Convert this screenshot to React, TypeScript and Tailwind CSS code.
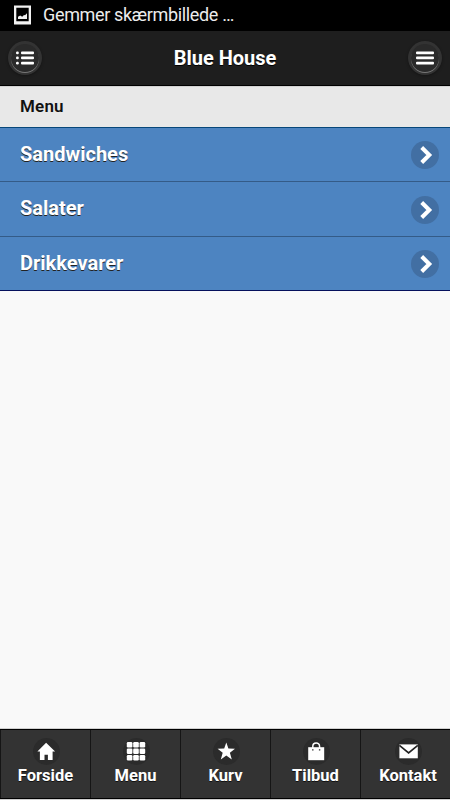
import React from 'react'

const categories = ['Sandwiches', 'Salater', 'Drikkevarer']

const tabs = [
    { label: 'Forside', icon: <HomeIcon /> },
    { label: 'Menu', icon: <GridIcon /> },
    { label: 'Kurv', icon: <StarIcon /> },
    { label: 'Tilbud', icon: <BagIcon /> },
    { label: 'Kontakt', icon: <MailIcon /> },
]

function HomeIcon() {
    return (
        <svg viewBox="0 0 27 27" className="w-[27px] h-[27px]" fill="white">
            <path d="M13.1 4.7 22.1 13.6H19.6V22H14.9V16.8H11.5V22H6.9V13.6H4.4Z" />
        </svg>
    )
}

function GridIcon() {
    return (
        <svg viewBox="0 0 27 27" className="w-[27px] h-[27px]" fill="white">
            {[4.1, 10.6, 17].map((y) => (
                [3.8, 10.2, 16.6].map((x) => <rect key={`${x}-${y}`} x={x} y={y} width="5.6" height="5.4" rx="1.2" />)
            ))}
        </svg>
    )
}

function StarIcon() {
    return (
        <svg viewBox="0 0 27 27" className="w-[27px] h-[27px]" fill="white">
            <path d="M13.3 4.4 15.4 10.5 22 10.7 16.9 14.7 18.8 21.4 13.3 17.6 7.8 21.4 9.7 14.7 4.6 10.7 11.2 10.5Z" />
        </svg>
    )
}

function BagIcon() {
    return (
        <svg viewBox="0 0 27 27" className="w-[27px] h-[27px]">
            <path d="M5.2 9.2H21.2V22.2H5.2Z" fill="white" />
            <path d="M9.8 11.4V8.4C9.8 4 16.6 4 16.6 8.4V11.4" fill="none" stroke="white" strokeWidth="1.5" />
            <path d="M9.1 11.8H10.5M15.9 11.8H17.3" stroke="#2b2b2b" strokeWidth="1.2" />
        </svg>
    )
}

function MailIcon() {
    return (
        <svg viewBox="0 0 27 27" className="w-[27px] h-[27px]">
            <path d="M4.4 6.4H22.8V20.3H4.4Z" fill="white" />
            <path d="M4.4 7.4 13.6 14.8 22.8 7.4" fill="none" stroke="#222" strokeWidth="1.7" />
        </svg>
    )
}

const RoundButton = ({ children, label }) => {
    return (
        <button aria-label={label} className="w-[34px] h-[34px] rounded-full bg-[#333] flex items-center justify-center shadow-[0_1px_3px_rgba(0,0,0,0.35)]">
            <span className="w-[28px] h-[28px] rounded-full bg-[#2a2a2a] flex items-center justify-center shadow-[0_1px_0_#777]">
                {children}
            </span>
        </button>
    )
}

const App = () => {
    return (
        <div className="h-[800px] w-[450px] overflow-hidden flex flex-col bg-[#f9f9f9] font-['Roboto',sans-serif]">
            <div className="h-[31px] shrink-0 bg-black flex items-center pl-[14px] pb-[1px]">
                <svg viewBox="0 0 17 20" className="w-[17px] h-[20px]">
                    <path fillRule="evenodd" d="M0 0.5H17V19.5H0ZM2.3 2.8V16.3H14.7V2.8Z" fill="#f2f2f2" />
                    <path d="M4 14V11.8L6.2 10.6 8.2 11.8 10 10 11 10.3 13 8.2V14Z" fill="#f2f2f2" />
                </svg>
                <span className="ml-[12px] text-[18px] leading-[28px] tracking-[-0.34px] text-[#ececec] whitespace-nowrap">Gemmer skærmbillede …</span>
            </div>

            <header className="h-[55px] shrink-0 bg-[#1e1e1e] border-b border-black flex items-center justify-between px-2">
                <RoundButton label="Liste">
                    <svg viewBox="0 0 18 14" className="w-[18px] h-[14px]" fill="white">
                        {[0.5, 5.5, 10.7].map((y) => (
                            <g key={y}>
                                <rect x="0" y={y} width="2.8" height="2.8" rx="1.2" />
                                <rect x="5" y={y} width="13" height="2.8" rx="1" />
                            </g>
                        ))}
                    </svg>
                </RoundButton>
                <h1 className="text-[20px] leading-[24px] font-bold text-white [text-shadow:0_1px_0_#000]">Blue House</h1>
                <RoundButton label="Menu">
                    <svg viewBox="0 0 18 14" className="w-[18px] h-[14px]" fill="white">
                        {[0.5, 5.5, 10.7].map((y) => <rect key={y} x="0" y={y} width="18" height="2.8" rx="1" />)}
                    </svg>
                </RoundButton>
            </header>

            <h2 className="h-[41px] shrink-0 bg-[#e8e8e8] border-t border-t-[#d3d3d3] pl-5 text-[17px] leading-[38px] tracking-[0.2px] font-semibold text-[#111]">Menu</h2>

            <ul className="shrink-0 border-t border-[#07477a] bg-[#4d84c1]">
                {categories.map((name) => (
                    <li key={name} className="group h-[54px] border-b border-[#345b87] last:border-[#06105c] nth-2:h-[55px] flex items-center justify-between pl-5 pr-[11px]">
                        <span className="pb-[2px] text-[20px] leading-[24px] font-bold text-white [text-shadow:0_1px_0_#222]">{name}</span>
                        <span className="w-[28px] h-[28px] rounded-full bg-[#426fa3] group-nth-2:mt-[2px]">
                            <svg viewBox="0 0 28 28" className="w-[28px] h-[28px]" fill="none" stroke="white" strokeWidth="4">
                                <path d="M10.7 6.5 18.3 14 10.7 21.5" />
                            </svg>
                        </span>
                    </li>
                ))}
            </ul>

            <main className="flex-1" />

            <nav className="h-[72px] shrink-0 border-t border-t-[#d0d0d0] border-b border-b-[#d0d0d0]">
                <div className="h-[70px] w-[455px] bg-[#333] border-y border-black flex">
                    {tabs.map((tab) => (
                        <a key={tab.label} className="w-[90px] last:w-[95px] border-l border-[#151515] flex flex-col items-center pt-[8px]">
                            <span className="ml-[1px] w-[27px] h-[27px] rounded-full bg-[#2b2b2b]">{tab.icon}</span>
                            <span className="mt-[1px] text-[16.5px] leading-[20px] font-bold text-white [text-shadow:0_1px_0_#111]">{tab.label}</span>
                        </a>
                    ))}
                </div>
            </nav>
        </div>
    )
}

export default App
